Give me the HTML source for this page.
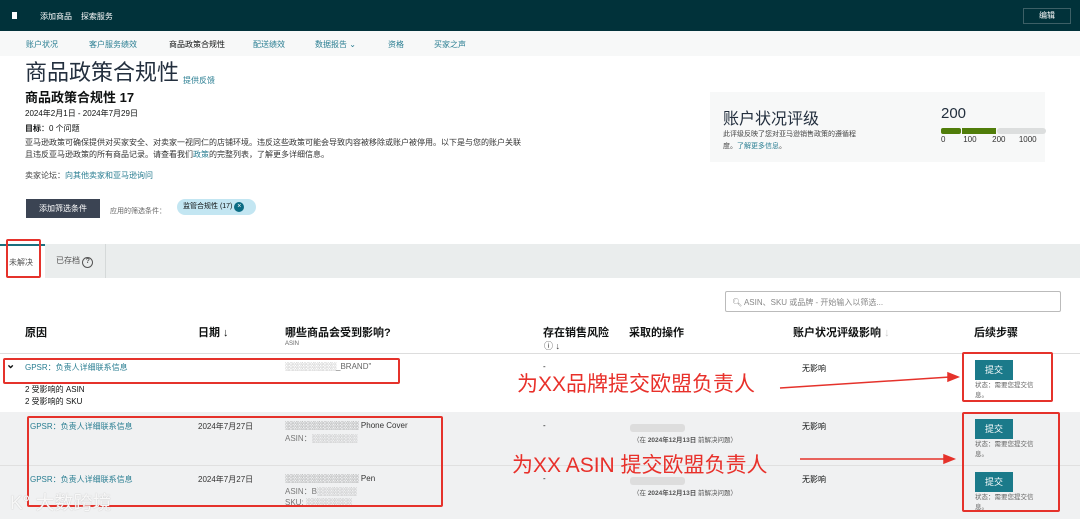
<!DOCTYPE html><html><head><meta charset="utf-8"><style>
*{margin:0;padding:0;box-sizing:border-box}
body{width:1080px;height:519px;overflow:hidden;position:relative;background:#fff;font-family:"Liberation Sans","Noto Sans CJK SC",sans-serif;color:#0f1111}
.a{position:absolute;white-space:nowrap}
.s{font-size:8px}
.l{color:#2a7e92}
.rb{position:absolute;border:2px solid #e5322b;border-radius:2px}
.btn{position:absolute;background:#1b7a8a;color:#fff;font-size:9px;width:38px;height:20px;text-align:center;line-height:20px}
.red{color:#e8302a;font-size:21px}
</style></head><body>
<div class="a" style="left:0;top:0;width:1080px;height:31px;background:#01323a"></div>
<div class="a" style="left:12px;top:12px;width:5px;height:7px;background:#fff"></div>
<div class="a s" style="left:40px;top:11px;color:#fff">添加商品&nbsp;&nbsp;&nbsp;&nbsp;探索服务</div>
<div class="a s" style="left:1023px;top:8px;width:48px;height:16px;border:1px solid #3d6066;color:#fff;text-align:center;line-height:14px">编辑</div>
<div class="a" style="left:0;top:31px;width:1080px;height:25px;background:#f7f8f8"></div>
<div class="a s l" style="left:26px;top:39px">账户状况</div>
<div class="a s l" style="left:89px;top:39px">客户服务绩效</div>
<div class="a s" style="left:169px;top:39px">商品政策合规性</div>
<div class="a s l" style="left:253px;top:39px">配送绩效</div>
<div class="a s l" style="left:315px;top:39px">数据报告 ⌄</div>
<div class="a s l" style="left:388px;top:39px">资格</div>
<div class="a s l" style="left:434px;top:39px">买家之声</div>
<div class="a" style="left:25px;top:60px;font-size:22px;color:#232f3e;line-height:26px">商品政策合规性</div>
<div class="a s l" style="left:183px;top:75px">提供反馈</div>
<div class="a" style="left:25px;top:87px;font-size:13px;font-weight:bold">商品政策合规性 17</div>
<div class="a s" style="left:25px;top:108px">2024年2月1日 - 2024年7月29日</div>
<div class="a s" style="left:25px;top:123px"><b>目标</b>：0 个问题</div>
<div class="a s" style="left:25px;top:137px;color:#333">亚马逊政策可确保提供对买家安全、对卖家一视同仁的店铺环境。违反这些政策可能会导致内容被移除或账户被停用。以下是与您的账户关联</div>
<div class="a s" style="left:25px;top:149px;color:#333">且违反亚马逊政策的所有商品记录。请查看我们<span class="l">政策</span>的完整列表，了解更多详细信息。</div>
<div class="a s" style="left:25px;top:170px;color:#444">卖家论坛：<span class="l">向其他卖家和亚马逊询问</span></div>
<div class="a s" style="left:26px;top:199px;width:74px;height:19px;background:#3b4453;color:#fff;text-align:center;line-height:19px">添加筛选条件</div>
<div class="a" style="left:110px;top:206px;font-size:7px;color:#666">应用的筛选条件：</div>
<div class="a" style="left:177px;top:199px;width:79px;height:16px;border-radius:8px;background:#c3e6f2;font-size:7px;line-height:16px;padding-left:6px">监管合规性 (17) <span style="display:inline-block;width:10px;height:10px;border-radius:5px;background:#0a6b83;color:#fff;font-size:7px;line-height:10px;text-align:center">×</span></div>
<div class="a" style="left:710px;top:92px;width:335px;height:70px;background:#f7f8f8"></div>
<div class="a" style="left:723px;top:105px;font-size:16px;color:#232f3e">账户状况评级</div>
<div class="a" style="left:723px;top:129px;font-size:7px;color:#444;line-height:12px">此评级反映了您对亚马逊销售政策的遵循程<br>度。<span class="l">了解更多信息</span>。</div>
<div class="a" style="left:941px;top:105px;font-size:15px;color:#232f3e">200</div>
<div class="a" style="left:941px;top:128px;width:20px;height:6px;background:#507d0a;border-radius:2px"></div>
<div class="a" style="left:962px;top:128px;width:34px;height:6px;background:#507d0a"></div>
<div class="a" style="left:997px;top:128px;width:49px;height:6px;background:#dcdede;border-radius:3px"></div>
<div class="a" style="left:941px;top:135px;font-size:8px;color:#333">0&nbsp;&nbsp;&nbsp;&nbsp;&nbsp;&nbsp;&nbsp;&nbsp;100&nbsp;&nbsp;&nbsp;&nbsp;&nbsp;&nbsp;&nbsp;200&nbsp;&nbsp;&nbsp;&nbsp;&nbsp;&nbsp;1000</div>
<div class="a" style="left:0;top:244px;width:1080px;height:34px;background:#eaeded"></div>
<div class="a" style="left:0;top:244px;width:45px;height:34px;background:#fff;border-top:2px solid #1a6f7e"></div>
<div class="a" style="left:105px;top:244px;width:1px;height:34px;background:#d5d9d9"></div>
<div class="a s" style="left:9px;top:257px;color:#555">未解决</div>
<div class="a s" style="left:56px;top:255px;color:#555">已存档 <span style="display:inline-block;width:11px;height:11px;border:1.5px solid #555;border-radius:6px;font-size:7px;text-align:center;line-height:8px;font-weight:bold">?</span></div>
<div class="rb" style="left:6px;top:239px;width:35px;height:39px"></div>
<div class="a" style="left:725px;top:291px;width:336px;height:21px;border:1px solid #bbb;border-radius:2px;font-size:8px;color:#888;padding:5px 0 0 6px">🔍︎ ASIN、SKU 或品牌 - 开始输入以筛选...</div>
<div class="a" style="left:25px;top:324px;font-size:11px;font-weight:bold">原因</div>
<div class="a" style="left:198px;top:324px;font-size:11px;font-weight:bold">日期 ↓</div>
<div class="a" style="left:285px;top:324px;font-size:11px;font-weight:bold">哪些商品会受到影响?</div>
<div class="a" style="left:285px;top:341px;font-size:6px;color:#666">ASIN</div>
<div class="a" style="left:543px;top:324px;font-size:11px;font-weight:bold">存在销售风险</div>
<div class="a" style="left:544px;top:339px;font-size:9px;color:#333">ⓘ ↓</div>
<div class="a" style="left:629px;top:324px;font-size:11px;font-weight:bold">采取的操作</div>
<div class="a" style="left:793px;top:324px;font-size:11px;font-weight:bold">账户状况评级影响 <span style="color:#ccc">↓</span></div>
<div class="a" style="left:974px;top:324px;font-size:11px;font-weight:bold">后续步骤</div>
<div class="a" style="left:0;top:353px;width:1080px;height:1px;background:#ddd"></div>
<div class="a" style="left:0;top:412px;width:1080px;height:107px;background:#f0f1f2"></div>
<div class="a" style="left:0;top:465px;width:1080px;height:1px;background:#e0e0e0"></div>
<div class="a" style="left:6px;top:358px;font-size:11px;font-weight:bold">⌄</div>
<div class="a s l" style="left:25px;top:362px">GPSR：负责人详细联系信息</div>
<div class="a s" style="left:25px;top:384px">2 受影响的 ASIN</div>
<div class="a s" style="left:25px;top:396px">2 受影响的 SKU</div>
<div class="a s" style="left:285px;top:362px;color:#666">░░░░░░░░░_BRAND"</div>
<div class="a s" style="left:543px;top:362px">-</div>
<div class="a s" style="left:802px;top:363px">无影响</div>
<div class="a s l" style="left:30px;top:421px">GPSR：负责人详细联系信息</div>
<div class="a s" style="left:198px;top:421px;color:#333">2024年7月27日</div>
<div class="a s" style="left:285px;top:421px;color:#333">░░░░░░░░░░░░░ Phone Cover</div>
<div class="a s" style="left:285px;top:433px;color:#777">ASIN：░░░░░░░░</div>
<div class="a s" style="left:543px;top:421px">-</div>
<div class="a" style="left:630px;top:424px;width:55px;height:8px;background:#ddd;border-radius:3px"></div>
<div class="a" style="left:633px;top:434px;font-size:6.5px;color:#555">（在 <b>2024年12月13日</b> 前解决问题）</div>
<div class="a s" style="left:802px;top:421px">无影响</div>
<div class="a s l" style="left:30px;top:474px">GPSR：负责人详细联系信息</div>
<div class="a s" style="left:198px;top:474px;color:#333">2024年7月27日</div>
<div class="a s" style="left:285px;top:474px;color:#333">░░░░░░░░░░░░░ Pen</div>
<div class="a s" style="left:285px;top:486px;color:#777">ASIN：B░░░░░░░</div>
<div class="a s" style="left:285px;top:498px;color:#777">SKU: ░░░░░░░░</div>
<div class="a s" style="left:543px;top:474px">-</div>
<div class="a" style="left:630px;top:477px;width:55px;height:8px;background:#ddd;border-radius:3px"></div>
<div class="a" style="left:633px;top:487px;font-size:6.5px;color:#555">（在 <b>2024年12月13日</b> 前解决问题）</div>
<div class="a s" style="left:802px;top:474px">无影响</div>
<div class="btn" style="left:975px;top:360px">提交</div>
<div class="a" style="left:975px;top:381px;font-size:6.5px;color:#666;line-height:10px">状态：需要您提交信<br>息。</div>
<div class="btn" style="left:975px;top:419px">提交</div>
<div class="a" style="left:975px;top:440px;font-size:6.5px;color:#666;line-height:10px">状态：需要您提交信<br>息。</div>
<div class="btn" style="left:975px;top:472px">提交</div>
<div class="a" style="left:975px;top:493px;font-size:6.5px;color:#666;line-height:10px">状态：需要您提交信<br>息。</div>
<div class="rb" style="left:3px;top:358px;width:397px;height:26px"></div>
<div class="rb" style="left:27px;top:416px;width:416px;height:91px"></div>
<div class="rb" style="left:962px;top:352px;width:91px;height:50px"></div>
<div class="rb" style="left:962px;top:412px;width:98px;height:100px"></div>
<div class="a red" style="left:517px;top:368px">为XX品牌提交欧盟负责人</div>
<div class="a red" style="left:512px;top:449px">为XX ASIN 提交欧盟负责人</div>
<svg class="a" style="left:0;top:0" width="1080" height="519"><g stroke="#e5322b" stroke-width="1.5" fill="#e5322b"><line x1="780" y1="388" x2="950" y2="377"/><polygon points="958,377 948,373 948,381"/><line x1="800" y1="459" x2="946" y2="459"/><polygon points="954,459 944,455 944,463"/></g></svg>
<div class="a" style="left:10px;top:488px;font-size:19px;color:rgba(255,255,255,0.9);text-shadow:0 0 1px #aaa">K° 大数跨境</div>
</body></html>
